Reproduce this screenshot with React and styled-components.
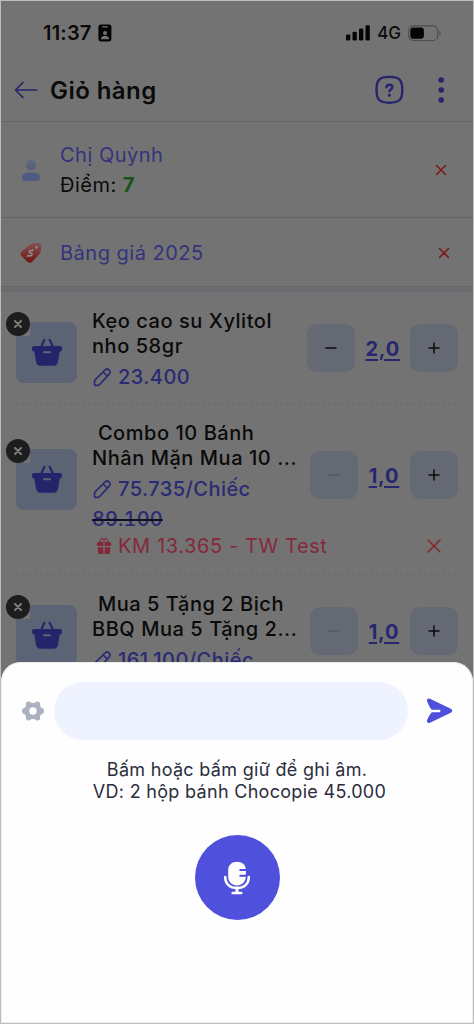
import React, { useState } from "react";
import styled, { createGlobalStyle } from "styled-components";
import { IoGift } from "react-icons/io5";

const items = [
  {
    id: 1,
    lines: ["Kẹo cao su Xylitol", "nho 58gr"],
    price: "23.400",
    qty: "2,0",
  },
  {
    id: 2,
    lines: ["\u00a0Combo 10 Bánh", "Nhân Mặn Mua 10 ..."],
    price: "75.735/Chiếc",
    oldPrice: "89.100",
    promo: "KM 13.365 - TW Test",
    qty: "1,0",
  },
  {
    id: 3,
    lines: ["\u00a0Mua 5 Tặng 2 Bịch", "BBQ Mua 5 Tặng 2..."],
    price: "161.100/Chiếc",
    qty: "1,0",
  },
];

const BadgeIcon = () => (
  <svg width="14" height="18" viewBox="0 0 14 18">
    <rect x="0.4" y="0.4" width="13" height="17" rx="2.4" fill="#050505" />
    <rect x="4" y="2.2" width="6" height="1.2" rx="0.6" fill="#737373" />
    <circle cx="7" cy="9" r="2" fill="#737373" />
    <path d="M2.8 15.2c.5-2.5 2-3.4 4.2-3.4s3.7.9 4.2 3.4z" fill="#737373" />
  </svg>
);

const SignalIcon = () => (
  <svg width="25" height="16" viewBox="0 0 25 16" fill="#050505">
    <rect x="0" y="9.5" width="4.3" height="6" rx="1.2" />
    <rect x="6.5" y="6.7" width="4.3" height="8.8" rx="1.2" />
    <rect x="13" y="3.6" width="4.3" height="11.9" rx="1.2" />
    <rect x="19.5" y="0.3" width="4.3" height="15.2" rx="1.2" />
  </svg>
);

const BatteryIcon = () => (
  <svg width="34" height="17" viewBox="0 0 34 17">
    <rect x="0.7" y="0.9" width="29" height="14.6" rx="4.5" fill="none" stroke="#4d4d4d" strokeWidth="1.1" />
    <rect x="2.3" y="2.6" width="13.6" height="11.2" rx="3" fill="#050505" />
    <path d="M31.3 6c1.8.6 1.8 4.2 0 4.8z" fill="#4d4d4d" />
  </svg>
);

const BackIcon = () => (
  <svg width="24" height="18" viewBox="0 0 24 18" fill="none" stroke="#25246c" strokeWidth="1.7" strokeLinecap="round" strokeLinejoin="round">
    <path d="M22.5 9H1.5M9 1.5L1.5 9L9 16.5" />
  </svg>
);

const HelpIcon = () => (
  <svg width="30" height="30" viewBox="0 0 30 30" fill="none" stroke="#25246c" strokeLinecap="round">
    <path d="M15.400 1.9c10 0 12.900 2.900 12.900 12.900s-2.900 12.900-12.900 12.900S2.500 24.800 2.500 14.800 5.400 1.900 15.400 1.900z" strokeWidth="2.4" />
    <path d="M12.500 12.4c.2-3.6 5.8-3.4 5.8-.1 0 2-2.8 2-2.9 4.100" strokeWidth="2.4" />
    <circle cx="15.400" cy="20.3" r="1.5" fill="#25246c" stroke="none" />
  </svg>
);

const DotsIcon = () => (
  <svg width="6" height="28" viewBox="0 0 6 28" fill="#25246c">
    <circle cx="3.200" cy="4" r="2.8" />
    <circle cx="3.200" cy="14" r="2.8" />
    <circle cx="3.200" cy="24" r="2.8" />
  </svg>
);

const UserIcon = () => (
  <svg width="20" height="23" viewBox="0 0 20 23">
    <defs>
      <linearGradient id="head" x1="0" y1="0" x2="0" y2="1">
        <stop offset="0" stopColor="#626b7c" />
        <stop offset="1" stopColor="#525e7d" />
      </linearGradient>
    </defs>
    <circle cx="10" cy="6" r="5.3" fill="url(#head)" />
    <path d="M1 18.5c0-3.600 2.800-5.100 9-5.100s9 1.500 9 5.100c0 2.400-1 3.600-3 3.600H4c-2 0-3-1.200-3-3.600z" fill="#4d5c80" />
  </svg>
);

const TagIcon = () => (
  <svg width="22" height="22" viewBox="0 0 24 24">
    <defs>
      <linearGradient id="tag" x1="0" y1="0" x2="0" y2="1">
        <stop offset="0" stopColor="#825454" />
        <stop offset="0.5" stopColor="#7c3230" />
        <stop offset="1" stopColor="#6d1513" />
      </linearGradient>
    </defs>
    <path d="M10.5 3.3c2.500-2.200 7.500-2.700 10.500-1.900 1.500.5 1.900 1.300 2 3 .2 3.800-.2 7.200-2 9l-7.600 8.100c-1.600 1.600-3.600 1.600-5.200 0l-6.400-5.900c-1.600-1.600-1.600-3.600 0-5.200z" fill="url(#tag)" />
    <circle cx="18" cy="5.8" r="1.6" fill="#8d8080" />
    <path d="M13.3 9.6c-1.400-1-4 .3-3 1.800.8 1 2.700.3 2.900 1.900.1 1.600-2.400 2.600-4.200 1.400" fill="none" stroke="#938b8b" strokeWidth="1.6" strokeLinecap="round" />
    <path d="M14.3 8.1l-1 1.3M8.7 14.9l-.9 1" stroke="#938b8b" strokeWidth="1.3" strokeLinecap="round" />
  </svg>
);

const CrossIcon = ({ size, color, width }) => (
  <svg width={size} height={size} viewBox="0 0 12 12" fill="none" stroke={color} strokeWidth={width} strokeLinecap="round">
    <path d="M1.5 1.5l9 9M10.5 1.5l-9 9" />
  </svg>
);

const BasketIcon = () => (
  <svg width="32" height="30" viewBox="0 0 32 30">
    <path d="M13.4 2.8L10.3 9.5M18.6 2.8l3.3 6.7" fill="none" stroke="#25246a" strokeWidth="2.1" strokeLinecap="round" />
    <path d="M3 9h26c1.500 0 2 .9 2 2.400 0 2.200-.6 3-2.300 3.200l-1.600 9.400c-.6 3.600-2 4.800-5 4.800H9.900c-3 0-4.400-1.200-5-4.800L3.300 14.600C1.600 14.400 1 13.600 1 11.400 1 9.900 1.500 9 3 9z" fill="#25246a" />
    <path d="M12.9 15.3h6.200" stroke="#5c6375" strokeWidth="1.900" strokeLinecap="round" />
  </svg>
);

const PencilIcon = () => (
  <svg width="19" height="19" viewBox="0 0 19 19" fill="none" stroke="#2b2a74" strokeWidth="1.7" strokeLinejoin="round" strokeLinecap="round">
    <path d="M1.6 17.4V13.2c0-.6.2-1 .7-1.5L12 2c1.400-1.300 2.900-1.200 4.100 0 1.200 1.200 1.300 2.700 0 4.100L6.700 16.500c-.6.6-1 .9-1.700.9zM10.200 4l4 4" />
  </svg>
);

const GearIcon = () => (
  <svg width="24" height="24" viewBox="0 0 24 24">
    <path
      d="M9.3 3.2C9 2 6.5 2.3 5.2 3.6 4.3 4.7 5.6 6.2 4.5 7.8 3.5 9.4 1 8.8 1 12s2.500 2.600 3.500 4.200c1.100 1.600-.2 3.100.7 4.200 1.300 1.300 3.800 1.600 4.100.4.9-1.100 4.500-1.100 5.400 0 .3 1.200 2.800.9 4.100-.4.9-1.100-.4-2.600.7-4.200 1-1.600 3.500-1 3.500-4.200s-2.500-2.600-3.500-4.200c-1.100-1.600.2-3.100-.7-4.200-1.300-1.300-3.800-1.600-4.100-.4-.9 1.100-4.500 1.100-5.400 0z"
      fill="#adb1bf"
    />
    <circle cx="12" cy="12" r="3.7" fill="#fff" />
  </svg>
);

const SendIcon = () => (
  <svg width="27" height="27" viewBox="0 0 27 27">
    <path d="M1.2 3.4C.4 1.400 2 0 4 .8l20.800 10c2 1 2 3 0 4L4 24.800c-2 .9-3.700-.7-2.900-2.700.9-2.300 2.700-5.600 4.700-7.800h7.400c1.700 0 1.700-2.500 0-2.500H5.800C3.800 9.600 2.100 5.700 1.200 3.400z" fill="#4f50db" />
  </svg>
);

const MicIcon = () => (
  <svg width="28" height="34" viewBox="0 0 28 34" fill="none" stroke="#fff" strokeLinecap="round">
    <path d="M14 .8c5 0 8.600 3 8.800 7.200h-5.600a1 1 0 0 0 0 2h5.700v3.800h-5.700a1 1 0 0 0 0 2h5.600C22.600 21 19 24.400 14 24.400S5.200 21 5.200 16V9C5.200 4 9 .8 14 .8z" fill="#fff" stroke="none" />
    <path d="M2.2 16c0 7 4.500 11 11.800 11s11.800-4 11.800-11" strokeWidth="2.5" />
    <path d="M14 27v4.500" strokeWidth="3" />
    <path d="M9.7 32h8.600" strokeWidth="2.6" />
  </svg>
);

const GlobalStyle = createGlobalStyle`
  * {
    box-sizing: border-box;
  }
  body {
    margin: 0;
    font-family: Inter, "Noto Sans", sans-serif;
  }
`;

const CartItem = ({ item }) => (
  <ItemBox>
    <ItemMain>
      <Thumb>
        <BasketIcon />
        <RemoveCorner>
          <RemoveButton>
            <CrossIcon size={8} color="#7c7c7c" width={3} />
          </RemoveButton>
        </RemoveCorner>
      </Thumb>
      <ItemText>
        {item.lines.map((line) => (
          <ItemName key={line}>{line}</ItemName>
        ))}
        <Price>
          <PencilIcon />
          {item.price}
        </Price>
        {item.oldPrice && <OldPrice>{item.oldPrice}</OldPrice>}
      </ItemText>
      <Stepper>
        <StepButton $muted={item.qty === "1,0"}>
          <svg width="14" height="14" viewBox="0 0 14 14" stroke="currentColor" strokeWidth="1.5">
            <path d="M1.5 7h11" />
          </svg>
        </StepButton>
        <Quantity>{item.qty}</Quantity>
        <StepButton>
          <svg width="14" height="14" viewBox="0 0 14 14" stroke="currentColor" strokeWidth="1.5">
            <path d="M1.5 7h11M7 1.5v11" />
          </svg>
        </StepButton>
      </Stepper>
    </ItemMain>
    {item.promo && (
      <Promo>
        <IoGift size={18} />
        <span>{item.promo}</span>
        <CrossIcon size={16} color="#832a2a" width={1.2} />
      </Promo>
    )}
  </ItemBox>
);

export default function App() {
  const [text, setText] = useState("");

  return (
    <Screen>
      <GlobalStyle />
      <StatusBar>
        <Clock>11:37</Clock>
        <BadgeIcon />
        <StatusRight>
          <SignalIcon />
          <Network>4G</Network>
          <BatteryIcon />
        </StatusRight>
      </StatusBar>
      <Header>
        <BackIcon />
        <Title>Giỏ hàng</Title>
        <HelpIcon />
        <DotsIcon />
      </Header>
      <InfoRow $height={96}>
        <InfoIcon>
          <UserIcon />
        </InfoIcon>
        <InfoText>
          <InfoLink>Chị Quỳnh</InfoLink>
          <Points>
            Điểm: <b>7</b>
          </Points>
        </InfoText>
        <InfoClose $right={26}>
          <CrossIcon size={12} color="#7c1a1a" width={1.6} />
        </InfoClose>
      </InfoRow>
      <InfoRow $height={69}>
        <InfoIcon>
          <TagIcon />
        </InfoIcon>
        <InfoText>
          <InfoLink>Bảng giá 2025</InfoLink>
        </InfoText>
        <InfoClose $right={23}>
          <CrossIcon size={12} color="#7c1a1a" width={1.6} />
        </InfoClose>
      </InfoRow>
      <Band />
      {items.map((item) => (
        <CartItem key={item.id} item={item} />
      ))}
      <Sheet>
        <InputRow>
          <GearIcon />
          <VoiceInput value={text} onChange={(e) => setText(e.target.value)} />
          <SendIcon />
        </InputRow>
        <Hint>
          Bấm hoặc bấm giữ để ghi âm.
          <br />
          <HintExample>VD: 2 hộp bánh Chocopie 45.000</HintExample>
        </Hint>
        <MicButton>
          <MicIcon />
        </MicButton>
      </Sheet>
    </Screen>
  );
}

const Screen = styled.div`
  position: relative;
  width: 474px;
  height: 1024px;
  overflow: hidden;
  background: #737373;
  border: 1px solid #bdbfbf;
  color: #0a0a0a;
`;

const StatusBar = styled.div`
  display: flex;
  align-items: center;
  height: 62px;
  padding: 2px 31px 0 42px;
`;

const Clock = styled.span`
  margin-right: 6px;
  font-size: 20px;
  font-weight: 600;
  letter-spacing: 0.2px;
`;

const StatusRight = styled.div`
  display: flex;
  align-items: center;
  margin-left: auto;
`;

const Network = styled.span`
  margin: 0 7px 0 6px;
  font-size: 17px;
  font-weight: 500;
`;

const Header = styled.div`
  display: flex;
  align-items: center;
  height: 59px;
  padding: 0 29px 4px 13px;
  border-bottom: 1px solid #676767;
  svg:last-child {
    margin-left: 34px;
  }
`;

const Title = styled.h1`
  flex: 1;
  margin: 0 0 0 12px;
  font-size: 24px;
  font-weight: 600;
  letter-spacing: 0.45px;
`;

const InfoRow = styled.div`
  display: flex;
  align-items: center;
  height: ${(props) => props.$height}px;
  padding-top: 1px;
  border-bottom: 1px solid #646565;
`;

const InfoIcon = styled.div`
  display: flex;
  justify-content: center;
  width: 59px;
  svg {
    flex: none;
  }
`;

const InfoText = styled.div`
  flex: 1;
  font-size: 20px;
  line-height: 30px;
  letter-spacing: 0.5px;
`;

const InfoLink = styled.div`
  color: #34337c;
`;

const Points = styled.div`
  b {
    color: #1b5216;
  }
`;

const InfoClose = styled.div`
  display: flex;
  margin-right: ${(props) => props.$right}px;
`;

const Band = styled.div`
  height: 5px;
  background: #6a6c70;
`;

const ItemBox = styled.div`
  margin: 0 15px;
  padding: 16px 0 12px;
  background: linear-gradient(90deg, #676767 55%, transparent 0) bottom left / 6px 1px repeat-x;
`;

const ItemMain = styled.div`
  display: flex;
  align-items: center;
`;

const Thumb = styled.div`
  position: relative;
  display: flex;
  align-items: center;
  justify-content: center;
  width: 61px;
  height: 61px;
  margin: 4px 15px 0 0;
  border-radius: 8px;
  background: #5c6375;
`;

const RemoveCorner = styled.div`
  position: absolute;
  top: -10px;
  left: -10px;
  width: 24px;
  height: 24px;
  background: linear-gradient(#737373, #737373) bottom right / 14px 14px no-repeat;
`;

const RemoveButton = styled.div`
  display: flex;
  align-items: center;
  justify-content: center;
  width: 24px;
  height: 24px;
  border-radius: 50%;
  background: #1d1d1d;
`;

const ItemText = styled.div`
  flex: 1;
  min-width: 0;
  padding-top: 1px;
  font-size: 20px;
  letter-spacing: 0.55px;
  white-space: nowrap;
`;

const ItemName = styled.div`
  font-weight: 500;
  line-height: 25.2px;
`;

const Price = styled.div`
  display: flex;
  align-items: center;
  gap: 6px;
  height: 30px;
  margin: 2.6px 0 0 1px;
  color: #2b2a74;
  font-weight: 450;
  letter-spacing: 0.45px;
`;

const OldPrice = styled.div`
  color: #2b2a74;
  font-weight: 450;
  font-variant-numeric: tabular-nums;
  line-height: 30px;
  letter-spacing: 0.1px;
  text-decoration: line-through #101020 1.5px;
`;

const Stepper = styled.div`
  display: flex;
  align-items: center;
  gap: 10px;
  margin-top: -5px;
`;

const StepButton = styled.div`
  display: flex;
  align-items: center;
  justify-content: center;
  width: 48px;
  height: 48px;
  border-radius: 10px;
  background: #646973;
  color: ${(props) => (props.$muted ? "#555961" : "#0a0a0a")};
`;

const Quantity = styled.span`
  min-width: 32px;
  padding-top: 2px;
  color: #272670;
  font-size: 20px;
  font-weight: 650;
  letter-spacing: 0.8px;
  line-height: 26px;
  text-align: center;
  text-decoration: underline;
  text-underline-offset: 3px;
  text-decoration-thickness: 2px;
`;

const Promo = styled.div`
  display: flex;
  align-items: center;
  height: 24px;
  margin: 0 16px 5px 79px;
  color: #84293a;
  font-size: 20px;
  letter-spacing: 0.6px;
  span {
    flex: 1;
    margin-left: 5px;
  }
`;

const Sheet = styled.div`
  position: absolute;
  left: 0;
  right: 0;
  bottom: 0;
  display: flex;
  flex-direction: column;
  align-items: center;
  height: 361px;
  padding-top: 20px;
  border-radius: 20px 20px 0 0;
  background: #fefefe;
  box-shadow: inset 0 0 0 1px #ebebeb;
`;

const InputRow = styled.div`
  display: flex;
  align-items: center;
  width: 100%;
  padding: 0 20px 0 20px;
`;

const VoiceInput = styled.input`
  flex: 1;
  height: 58px;
  margin: 0 18px 0 9px;
  padding: 0 24px;
  border: 0;
  border-radius: 29px;
  outline: none;
  background: #eff3ff;
  font: 18px Inter, sans-serif;
`;

const Hint = styled.p`
  margin: 19px 0 0;
  color: #2b2d3d;
  font-size: 18px;
  line-height: 21.5px;
  letter-spacing: 0.3px;
  text-align: center;
`;

const HintExample = styled.span`
  margin-left: 5px;
`;

const MicButton = styled.div`
  display: flex;
  align-items: center;
  justify-content: center;
  width: 85px;
  height: 85px;
  margin-top: 33px;
  border-radius: 50%;
  background: #4f50db;
`;
